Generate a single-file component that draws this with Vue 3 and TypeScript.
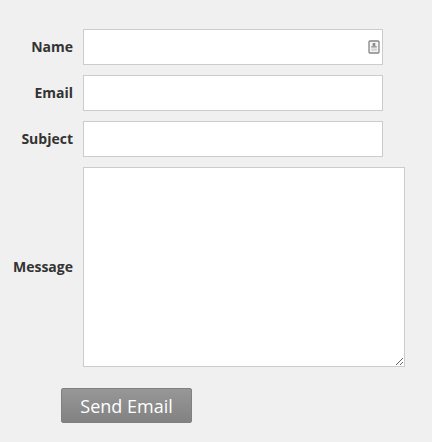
<script setup lang="ts">
const fields: { id: string; label: string }[] = [
  { id: 'name', label: 'Name' },
  { id: 'email', label: 'Email' },
  { id: 'subject', label: 'Subject' },
]
</script>

<template>
  <form class="form" @submit.prevent>
    <div v-for="f in fields" :key="f.id" class="row">
      <label class="label" :for="f.id">{{ f.label }}</label>
      <div class="control">
        <input :id="f.id" class="input" type="text" />
        <svg v-if="f.id === 'name'" class="contact" width="12" height="14" viewBox="0 0 12 14" aria-hidden="true">
          <rect x="1" y="1" width="10" height="12" rx="1" fill="#f4f4f4" stroke="#858585" stroke-width="1.3" />
          <rect x="4.7" y="3" width="2.6" height="3.2" fill="#8a8a8a" />
          <rect x="3.2" y="6" width="5.6" height="1.6" fill="#a0a0a0" />
          <rect x="3.2" y="8.4" width="5.6" height="2.4" fill="#d4d4d4" />
        </svg>
      </div>
    </div>
    <div class="row row-message">
      <label class="label" for="message">Message</label>
      <textarea id="message" class="textarea"></textarea>
    </div>
    <button class="send" type="submit">Send Email</button>
  </form>
</template>

<style>
html, body { margin: 0; background: #f0f0f0; }
</style>

<style scoped>
.form {
  box-sizing: border-box;
  width: 432px;
  height: 442px;
  padding-top: 29px;
  background: #f0f0f0;
  display: flex;
  flex-direction: column;
  gap: 10px;
  font-family: "Open Sans", sans-serif;
}
.row {
  display: flex;
  align-items: center;
  gap: 10px;
}
.label {
  width: 73px;
  text-align: right;
  font-size: 14px;
  font-weight: 700;
  color: #333;
  line-height: 20px;
}
.control {
  position: relative;
  width: 300px;
  height: 36px;
}
.input {
  box-sizing: border-box;
  display: block;
  width: 100%;
  height: 100%;
  margin: 0;
  border: 1px solid #ccc;
  background: #fff;
  outline: none;
}
.contact {
  position: absolute;
  right: 3px;
  top: 11px;
}
.textarea {
  box-sizing: border-box;
  display: block;
  width: 322px;
  height: 200px;
  margin: 0;
  border: 1px solid #ccc;
  background: #fff;
  outline: none;
}
.send {
  box-sizing: border-box;
  width: 131px;
  height: 35px;
  margin: 11px 0 0 61px;
  padding: 0;
  border: 1px solid #808080;
  border-radius: 2px;
  background: linear-gradient(#979797, #828282);
  color: #fff;
  font-family: "Open Sans", sans-serif;
  font-size: 18px;
  line-height: 24px;
}
</style>
